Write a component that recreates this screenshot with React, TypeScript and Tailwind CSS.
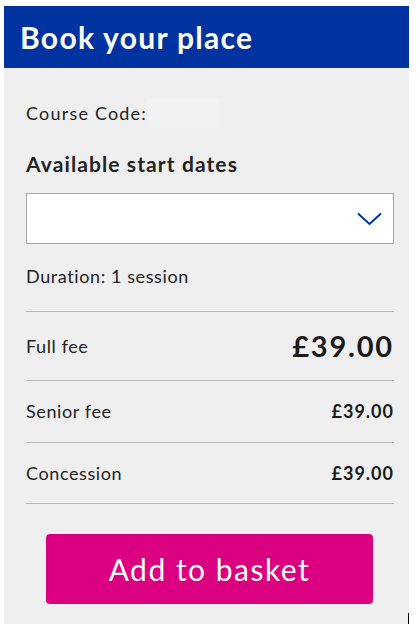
import React from 'react';

const fees = [
  { label: 'Senior fee', price: '£39.00', h: 'h-[62px]' },
  { label: 'Concession', price: '£39.00', h: 'h-[61px]' },
];

const App: React.FC = () => {
  return (
    <div className="min-h-[634px] bg-white pt-[6px] pl-[4px] font-['Lato',sans-serif] text-[#222]">
      <div className="relative w-[405px]">
        <div className="h-[62px] bg-[#0033a0] flex items-center px-4">
          <h1 className="text-[30px] font-bold text-white leading-none tracking-[1.3px]">Book your place</h1>
        </div>
        <div className="bg-[#efefef] pl-[22px] pr-[15px] pt-[30px] pb-[20px]">
          <div className="flex items-center h-[30px] text-[18px] tracking-[1.2px]">
            <span>Course Code:</span>
            <span className="w-[72px] h-[30px] bg-[#f2f2f2]" />
          </div>
          <h2 className="mt-[24px] text-[21px] font-bold leading-6 tracking-[1.1px]">Available start dates</h2>
          <div className="mt-[17px] h-[51px] bg-white border border-[#a6a6a6] flex items-center justify-end pr-[11px]">
            <svg width="25" height="14" viewBox="0 0 25 14" fill="none">
              <path d="M1 1.5 L12.5 12 L24 1.5" stroke="#0033a0" strokeWidth="2" />
            </svg>
          </div>
          <p className="mt-[20px] text-[18px] leading-6 tracking-[0.6px]">Duration: 1 session</p>
          <div className="mt-[23px] border-t border-[#b8b8b8]">
            <div className="h-[69px] flex items-center justify-between border-b border-[#b8b8b8]">
              <span className="text-[18px] tracking-[0.6px]">Full fee</span>
              <span className="text-[29px] font-bold tracking-[1.8px] text-[#1a1a1a]">£39.00</span>
            </div>
            {fees.map((f) => (
              <div key={f.label} className={`${f.h} flex items-center justify-between border-b border-[#b8b8b8]`}>
                <span className="text-[18px] tracking-[0.6px]">{f.label}</span>
                <span className="text-[18px] font-bold tracking-[1px] text-[#1a1a1a]">{f.price}</span>
              </div>
            ))}
          </div>
          <button className="mt-[30px] ml-[20px] w-[327px] h-[70px] rounded-[4px] bg-[#db007f] text-white text-[30px] leading-none tracking-[1.5px]">
            Add to basket
          </button>
        </div>
        <span className="absolute right-[0px] bottom-[0px] w-[1px] h-[11px] bg-black" />
      </div>
    </div>
  );
};

export default App;
